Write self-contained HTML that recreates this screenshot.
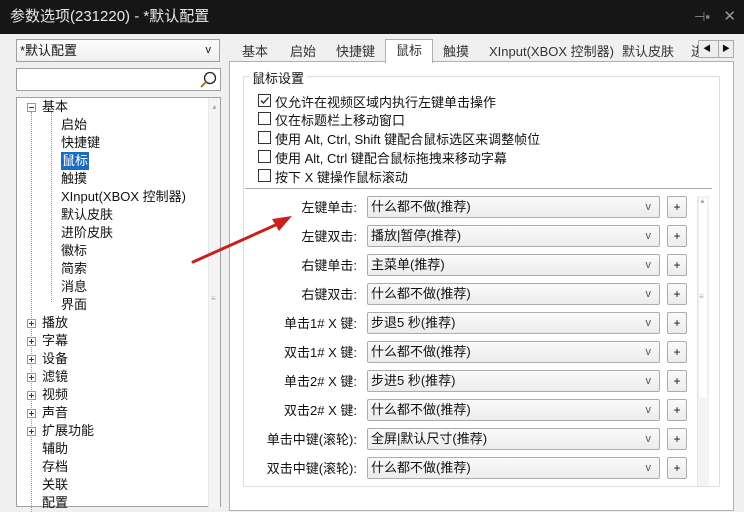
<!DOCTYPE html>
<html><head><meta charset="utf-8"><style>
*{margin:0;padding:0;box-sizing:border-box}
body{width:744px;height:500px;overflow:hidden;background:#f0f0f0;font-family:"Liberation Sans","Noto Sans CJK SC",sans-serif;font-size:13px;color:#111;position:relative}
.a{position:absolute}
.title{left:0;top:0;width:744px;height:34px;background:#161616;color:#e8e8e8;font-size:15px;line-height:34px;padding-left:10px}
.box{background:#fff;border:1px solid #a0a0a0}
.tree div{position:absolute;white-space:nowrap;line-height:18px}
.cb{width:13px;height:13px;border:1px solid #333;background:#fff}
.lbl{right:387px;text-align:right;white-space:nowrap}
.dd{left:367px;width:293px;height:22px;border:1px solid #acacac;border-radius:2px;background:linear-gradient(#fafafa,#ececec);line-height:20px;padding-left:3px}
.dd span{position:absolute;right:8px;top:0;font-size:11px;color:#555}
.pl{left:667px;width:20px;height:22px;border:1px solid #acacac;border-radius:2px;background:linear-gradient(#fafafa,#ececec);text-align:center;line-height:20px;font-size:12px}
.tree div.pm{width:9px;height:9px;border:1px solid #999;background:#fff;line-height:0}
.pm::before{content:"";position:absolute;left:1px;top:3px;width:5px;height:1px;background:#333}
.pp::after{content:"";position:absolute;left:3px;top:1px;width:1px;height:5px;background:#333}
</style></head><body>
<div class="a title">参数选项(231220) - *默认配置<span class="a" style="right:34px;top:0;color:#888;font-size:13px">⊣▪</span><span class="a" style="right:8px;top:0;color:#999">✕</span></div>

<div class="a box" style="left:16px;top:39px;width:204px;height:23px;background:linear-gradient(#fdfdfd,#f0f0f0);line-height:21px;padding-left:3px">*默认配置<span class="a" style="right:8px;top:0;font-size:11px">v</span></div>
<div class="a box" style="left:16px;top:68px;width:205px;height:23px"><svg class="a" style="right:3px;top:2px" width="18" height="18"><circle cx="11" cy="7" r="5.5" fill="none" stroke="#222" stroke-width="1.3"/><line x1="7" y1="11" x2="2" y2="16" stroke="#a08020" stroke-width="2"/></svg></div>
<div class="a box tree" style="left:16px;top:97px;width:205px;height:410px">
 <div class="a" style="left:191px;top:0;width:12px;height:410px;background:#f4f4f4;border-left:1px solid #e8e8e8"></div>
 <div class="a" style="left:194px;top:6px;font-size:7px;color:#aaa;line-height:8px">▲</div>
 <div class="a" style="left:194px;top:192px;font-size:8px;color:#aaa">≡</div>
 <div class="a" style="left:14px;top:14px;height:400px;border-left:1px dotted #999"></div>
 <div class="a" style="left:34px;top:14px;height:190px;border-left:1px dotted #999"></div>
 <div class="a pm" style="left:10px;top:5px"></div><div style="left:25px;top:0">基本</div>
 <div style="left:44px;top:18px">启始</div>
 <div style="left:44px;top:36px">快捷键</div>
 <div style="left:44px;top:54px;background:#1b6cc0;color:#fff;padding:0 1px">鼠标</div>
 <div style="left:44px;top:72px">触摸</div>
 <div style="left:44px;top:90px">XInput(XBOX 控制器)</div>
 <div style="left:44px;top:108px">默认皮肤</div>
 <div style="left:44px;top:126px">进阶皮肤</div>
 <div style="left:44px;top:144px">徽标</div>
 <div style="left:44px;top:162px">简索</div>
 <div style="left:44px;top:180px">消息</div>
 <div style="left:44px;top:198px">界面</div>
 <div class="a pm pp" style="left:10px;top:221px"></div><div style="left:25px;top:216px">播放</div>
 <div class="a pm pp" style="left:10px;top:239px"></div><div style="left:25px;top:234px">字幕</div>
 <div class="a pm pp" style="left:10px;top:257px"></div><div style="left:25px;top:252px">设备</div>
 <div class="a pm pp" style="left:10px;top:275px"></div><div style="left:25px;top:270px">滤镜</div>
 <div class="a pm pp" style="left:10px;top:293px"></div><div style="left:25px;top:288px">视频</div>
 <div class="a pm pp" style="left:10px;top:311px"></div><div style="left:25px;top:306px">声音</div>
 <div class="a pm pp" style="left:10px;top:329px"></div><div style="left:25px;top:324px">扩展功能</div>
 <div style="left:25px;top:342px">辅助</div>
 <div style="left:25px;top:360px">存档</div>
 <div style="left:25px;top:378px">关联</div>
 <div style="left:25px;top:396px">配置</div>
</div>

<div class="a" style="left:242px;top:41px;color:#333">基本</div>
<div class="a" style="left:290px;top:41px;color:#333">启始</div>
<div class="a" style="left:336px;top:41px;color:#333">快捷键</div>
<div class="a" style="left:385px;top:39px;width:48px;height:24px;background:#fff;border:1px solid #b0b0b0;border-bottom:none;z-index:2;text-align:center;line-height:22px;color:#333">鼠标</div>
<div class="a" style="left:443px;top:41px;color:#333">触摸</div>
<div class="a" style="left:489px;top:41px;color:#333">XInput(XBOX 控制器)</div>
<div class="a" style="left:622px;top:41px;color:#333">默认皮肤</div>
<div class="a" style="left:691px;top:41px;color:#333">进</div>
<div class="a" style="left:698px;top:40px;width:36px;height:18px;border:1px solid #aaa;background:#eee;font-size:8px;line-height:16px"><span style="position:absolute;left:4px">◀</span><span style="position:absolute;left:19px;border-left:1px solid #aaa;padding-left:3px">▶</span></div>
<div class="a" style="left:229px;top:61px;width:505px;height:450px;background:#fff;border:1px solid #b0b0b0"></div>
<div class="a" style="left:243px;top:76px;width:477px;height:411px;border:1px solid #ddd"></div>
<div class="a" style="left:249px;top:68px;background:#fff;padding:0 3px">鼠标设置</div>

<div class="a cb" style="left:258px;top:94px"><svg width="11" height="11" style="display:block"><path d="M2 5.5 L4.5 8 L9.5 2.5" fill="none" stroke="#222" stroke-width="1.3"/></svg></div>
<div class="a" style="left:275px;top:92px">仅允许在视频区域内执行左键单击操作</div>
<div class="a cb" style="left:258px;top:112px"></div><div class="a" style="left:275px;top:110px">仅在标题栏上移动窗口</div>
<div class="a cb" style="left:258px;top:131px"></div><div class="a" style="left:275px;top:129px">使用 Alt, Ctrl, Shift 键配合鼠标选区来调整帧位</div>
<div class="a cb" style="left:258px;top:150px"></div><div class="a" style="left:275px;top:148px">使用 Alt, Ctrl 键配合鼠标拖拽来移动字幕</div>
<div class="a cb" style="left:258px;top:169px"></div><div class="a" style="left:275px;top:167px">按下 X 键操作鼠标滚动</div>
<div class="a" style="left:245px;top:188px;width:467px;border-top:1px solid #aaa"></div>

<div class="a" style="left:697px;top:196px;width:12px;height:290px;background:#f4f4f4;border-left:1px solid #e4e4e4"></div>
<div class="a" style="left:698px;top:197px;width:10px;height:202px;background:#fff;border:1px solid #eee"></div>
<div class="a" style="left:699px;top:198px;font-size:7px;color:#aaa">▲</div>
<div class="a" style="left:699px;top:292px;font-size:8px;color:#aaa">≡</div>

<div class="a lbl" style="top:197px">左键单击:</div><div class="a dd" style="top:196px">什么都不做(推荐)<span>v</span></div><div class="a pl" style="top:196px">+</div>
<div class="a lbl" style="top:226px">左键双击:</div><div class="a dd" style="top:225px">播放|暂停(推荐)<span>v</span></div><div class="a pl" style="top:225px">+</div>
<div class="a lbl" style="top:255px">右键单击:</div><div class="a dd" style="top:254px">主菜单(推荐)<span>v</span></div><div class="a pl" style="top:254px">+</div>
<div class="a lbl" style="top:284px">右键双击:</div><div class="a dd" style="top:283px">什么都不做(推荐)<span>v</span></div><div class="a pl" style="top:283px">+</div>
<div class="a lbl" style="top:313px">单击1# X 键:</div><div class="a dd" style="top:312px">步退5 秒(推荐)<span>v</span></div><div class="a pl" style="top:312px">+</div>
<div class="a lbl" style="top:342px">双击1# X 键:</div><div class="a dd" style="top:341px">什么都不做(推荐)<span>v</span></div><div class="a pl" style="top:341px">+</div>
<div class="a lbl" style="top:371px">单击2# X 键:</div><div class="a dd" style="top:370px">步进5 秒(推荐)<span>v</span></div><div class="a pl" style="top:370px">+</div>
<div class="a lbl" style="top:400px">双击2# X 键:</div><div class="a dd" style="top:399px">什么都不做(推荐)<span>v</span></div><div class="a pl" style="top:399px">+</div>
<div class="a lbl" style="top:429px">单击中键(滚轮):</div><div class="a dd" style="top:428px">全屏|默认尺寸(推荐)<span>v</span></div><div class="a pl" style="top:428px">+</div>
<div class="a lbl" style="top:458px">双击中键(滚轮):</div><div class="a dd" style="top:457px">什么都不做(推荐)<span>v</span></div><div class="a pl" style="top:457px">+</div>

<svg class="a" style="left:0;top:0" width="744" height="500"><line x1="193" y1="262" x2="280" y2="223" stroke="#c8201c" stroke-width="3" stroke-linecap="round"/><path d="M292 216 L272 219 L279 231 Z" fill="#c8201c"/></svg>
</body></html>
